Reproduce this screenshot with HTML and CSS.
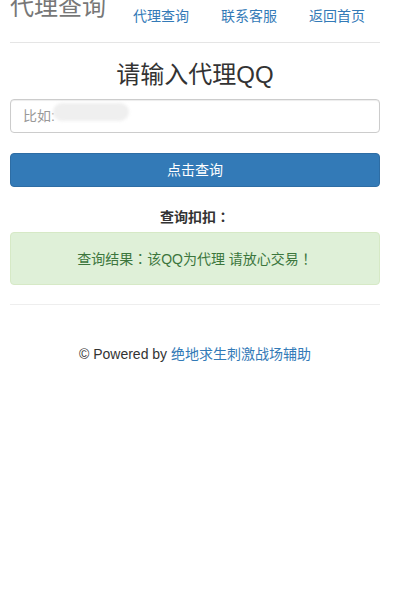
FILE: index.html
```html
<!DOCTYPE html>
<html lang="zh-CN">
<head>
<meta charset="utf-8">
<title>代理查询</title>
<link rel="stylesheet" href="styles.css">
</head>
<body>
<div class="container">
  <div class="header">
    <h3 class="brand">代理查询</h3>
    <ul class="nav">
      <li><a href="#">代理查询</a></li>
      <li><a href="#">联系客服</a></li>
      <li><a href="#">返回首页</a></li>
    </ul>
  </div>
  <h3 class="title">请输入代理QQ</h3>
  <div class="input-wrap">
    <input class="form-control" type="text" placeholder="比如:">
    <span class="mosaic"></span>
  </div>
  <button class="btn" type="button">点击查询</button>
  <div class="label">查询扣扣<span class="punct" lang="zh-TW">：</span></div>
  <div class="alert">查询结果<span class="punct" lang="zh-TW">：</span>该QQ为代理 请放心交易<span class="punct" lang="zh-TW">！</span></div>
  <hr class="divider">
  <footer class="footer">
    <p>© Powered by <a href="#">绝地求生刺激战场辅助</a></p>
  </footer>
</div>
</body>
</html>
```

FILE: styles.css
```css
html, body {
  margin: 0;
  padding: 0;
  background: #fff;
}
body {
  font-family: "Liberation Sans", Arial, "Noto Sans CJK SC", sans-serif;
  font-size: 14px;
  line-height: 20px;
  color: #333;
}
a {
  color: #337ab7;
  text-decoration: none;
}
.container {
  padding: 0 20px 0 10px;
}
.header {
  display: flex;
  justify-content: space-between;
  align-items: flex-start;
  height: 42px;
  border-bottom: 1px solid #e5e5e5;
}
.brand {
  margin: -5px 0 0 0;
  font-size: 24px;
  line-height: 24px;
  font-weight: 400;
  color: #777;
}
.nav {
  display: flex;
  list-style: none;
  margin: -4px 0 0 0;
  padding: 0;
}
.nav li + li {
  margin-left: 2px;
}
.nav a {
  display: block;
  padding: 10px 15px;
  line-height: 20px;
}
.title {
  margin: 19px 0 11px;
  font-size: 24px;
  line-height: 26px;
  font-weight: 400;
  text-align: center;
  color: #333;
}
.input-wrap {
  position: relative;
}
.form-control {
  display: block;
  box-sizing: border-box;
  width: 100%;
  height: 34px;
  margin: 0;
  padding: 6px 12px;
  font-family: inherit;
  font-size: 14px;
  line-height: 20px;
  color: #555;
  background: #fff;
  border: 1px solid #ccc;
  border-radius: 4px;
  box-shadow: inset 0 1px 1px rgba(0, 0, 0, .075);
  outline: none;
}
.form-control::placeholder {
  color: #999;
}
.mosaic {
  position: absolute;
  left: 43px;
  top: 4px;
  width: 76px;
  height: 18px;
  background: #efefef;
  border-radius: 9px;
  filter: blur(1.5px);
}
.btn {
  display: block;
  box-sizing: border-box;
  width: 100%;
  height: 34px;
  margin-top: 20px;
  padding: 6px 12px;
  font-family: inherit;
  font-size: 14px;
  line-height: 20px;
  color: #fff;
  background: #337ab7;
  border: 1px solid #2e6da4;
  border-radius: 4px;
}
.label {
  margin: 19px 0 5px;
  text-align: center;
  font-weight: 700;
}
.punct {
  font-family: "Noto Sans CJK TC", "Noto Sans CJK JP", sans-serif;
}
.alert {
  padding: 15px;
  text-align: center;
  color: #3c763d;
  background: #dff0d8;
  border: 1px solid #d6e9c6;
  border-radius: 4px;
}
.divider {
  margin: 19px 0 0;
  border: 0;
  border-top: 1px solid #eee;
}
.footer {
  padding-top: 39px;
  text-align: center;
}
.footer p {
  margin: 0;
  font-size: 14px;
  line-height: 21px;
}
```
